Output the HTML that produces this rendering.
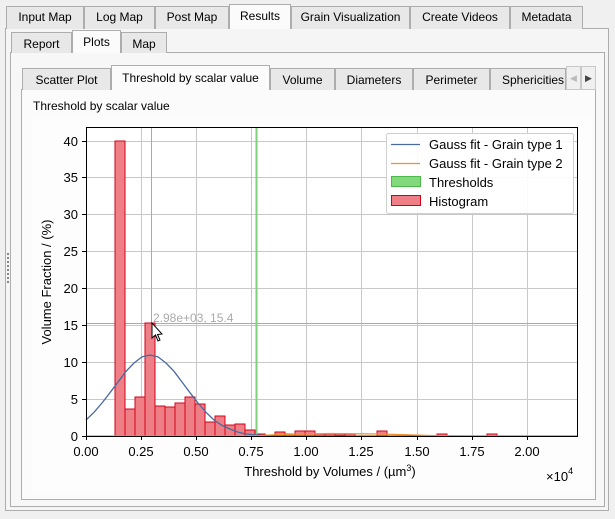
<!DOCTYPE html>
<html><head><meta charset="utf-8"><style>
body{margin:0;width:615px;height:519px;background:#f0f0f0;font-family:"Liberation Sans",Tahoma,sans-serif;font-size:12px;color:#000;position:relative;overflow:hidden}
.a{position:absolute;box-sizing:border-box}
.tab{position:absolute;box-sizing:border-box;border:1px solid #adadad;border-bottom:none;background:#e8e8e8;text-align:center;font-size:12px;line-height:21px}
.sel{background:#fbfbfb;z-index:3}
</style></head><body>
<div class="a" style="left:5px;top:28px;width:604px;height:483px;border:1px solid #adadad;background:#f5f5f5"></div>
<div class="tab" style="left:6px;top:6px;width:78px;height:23px">Input Map</div>
<div class="tab" style="left:84px;top:6px;width:71px;height:23px">Log Map</div>
<div class="tab" style="left:155px;top:6px;width:74px;height:23px">Post Map</div>
<div class="tab sel" style="left:229px;top:4px;width:62px;height:25px;line-height:22px">Results</div>
<div class="tab" style="left:291px;top:6px;width:119px;height:23px">Grain Visualization</div>
<div class="tab" style="left:410px;top:6px;width:100px;height:23px">Create Videos</div>
<div class="tab" style="left:510px;top:6px;width:73px;height:23px">Metadata</div>
<div class="a" style="left:10px;top:52px;width:595px;height:455px;border:1px solid #adadad;background:#f7f7f7"></div>
<div class="tab" style="left:11px;top:32px;width:61px;height:21px;line-height:23px">Report</div>
<div class="tab sel" style="left:72px;top:30px;width:49px;height:23px;line-height:22px">Plots</div>
<div class="tab" style="left:121px;top:32px;width:46px;height:21px;line-height:23px">Map</div>
<div class="a" style="left:21px;top:89px;width:575px;height:411px;border:1px solid #adadad;background:#fbfbfb"></div>
<div class="tab" style="left:22px;top:68px;width:89px;height:22px;line-height:23px">Scatter Plot</div>
<div class="tab sel" style="left:111px;top:65px;width:159px;height:25px;line-height:24px">Threshold by scalar value</div>
<div class="tab" style="left:270px;top:68px;width:65px;height:22px;line-height:23px">Volume</div>
<div class="tab" style="left:335px;top:68px;width:78px;height:22px;line-height:23px">Diameters</div>
<div class="tab" style="left:413px;top:68px;width:77px;height:22px;line-height:23px">Perimeter</div>
<div class="tab" style="left:490px;top:68px;width:76px;height:22px;line-height:23px;overflow:hidden;text-align:left;padding-left:11px">Sphericities</div>
<div class="tab" style="left:566px;top:66px;width:15px;height:24px;border:1px solid #c8c8c8;background:#f0f0f0;color:#bbb;font-size:9px;line-height:22px">◀</div>
<div class="tab" style="left:581px;top:66px;width:15px;height:24px;border:1px solid #c8c8c8;background:#f0f0f0;color:#444;font-size:9px;line-height:22px">▶</div>
<div class="a" style="left:33px;top:99px;font-size:12px">Threshold by scalar value</div>
<div class="a" style="left:7px;top:253px;width:3px;height:30px;border-left:2px dotted #888"></div>
<svg class="a" style="left:0;top:0" width="615" height="519" font-family="Liberation Sans, Arial, sans-serif">
<rect x="32" y="119" width="560" height="373" fill="#fff" opacity="0.6"/>
<rect x="86" y="127" width="492" height="309" fill="#fff"/>
<g stroke="#c8c8c8" stroke-width="1">
<line x1="141.5" y1="127" x2="141.5" y2="436"/><line x1="196.5" y1="127" x2="196.5" y2="436"/><line x1="251.5" y1="127" x2="251.5" y2="436"/><line x1="306.5" y1="127" x2="306.5" y2="436"/><line x1="361.5" y1="127" x2="361.5" y2="436"/><line x1="417.5" y1="127" x2="417.5" y2="436"/><line x1="472.5" y1="127" x2="472.5" y2="436"/><line x1="527.5" y1="127" x2="527.5" y2="436"/>
<line x1="86" y1="399.5" x2="578" y2="399.5"/><line x1="86" y1="362.5" x2="578" y2="362.5"/><line x1="86" y1="325.5" x2="578" y2="325.5"/><line x1="86" y1="288.5" x2="578" y2="288.5"/><line x1="86" y1="251.5" x2="578" y2="251.5"/><line x1="86" y1="214.5" x2="578" y2="214.5"/><line x1="86" y1="177.5" x2="578" y2="177.5"/><line x1="86" y1="141.5" x2="578" y2="141.5"/>
</g>
<g stroke="#aaa"><line x1="151.5" y1="127" x2="151.5" y2="436"/><line x1="86" y1="323.5" x2="578" y2="323.5"/></g>
<g fill="#ef7f86" stroke="#d40018" stroke-width="1">
<rect x="115" y="141" width="10" height="295"/><rect x="125" y="409" width="10" height="27"/><rect x="135" y="397" width="10" height="39"/><rect x="145" y="323" width="10" height="113"/><rect x="155" y="406" width="10" height="30"/><rect x="165" y="407" width="10" height="29"/><rect x="175" y="403" width="10" height="33"/><rect x="185" y="397" width="10" height="39"/><rect x="195" y="404" width="10" height="32"/><rect x="205" y="422" width="10" height="14"/><rect x="215" y="416" width="10" height="20"/><rect x="225" y="425" width="10" height="11"/><rect x="235" y="424" width="10" height="12"/><rect x="245" y="430" width="10" height="6"/><rect x="255" y="434" width="10" height="2"/><rect x="265" y="435" width="10" height="1"/><rect x="275" y="432" width="10" height="4"/><rect x="285" y="434" width="10" height="2"/><rect x="295" y="431" width="10" height="5"/><rect x="305" y="431" width="10" height="5"/><rect x="315" y="434" width="10" height="2"/><rect x="325" y="434" width="10" height="2"/><rect x="335" y="435" width="10" height="1"/><rect x="345" y="434" width="10" height="2"/><rect x="377" y="431" width="10" height="5"/><rect x="437" y="434" width="10" height="2"/><rect x="487" y="434" width="10" height="2"/>
</g>
<line x1="256.5" y1="127" x2="256.5" y2="436" stroke="#7fcf7f" stroke-width="2"/>
<polyline fill="none" stroke="#4a6aa0" stroke-width="1.3" stroke-linejoin="round" points="86,420 94,412.3 102,403 110,392.7 118,382 126,371.3 134,363 142,356.9 150,355 158,356.9 166,363 174,371.3 182,382 190,392.7 198,403 206,412.3 214,420 222,425.4 230,429 238,432.1 246,434 254,434.8 270,436 578,436"/>
<polyline fill="none" stroke="#f0902a" stroke-width="1.2" points="86,436 250,436 280,434.5 330,433.5 380,434 430,435.5 480,436 578,436"/>
<rect x="86.5" y="127.5" width="491" height="309" fill="none" stroke="#000"/>
<g stroke="#000"><line x1="82" y1="436.5" x2="86" y2="436.5"/><line x1="82" y1="399.5" x2="86" y2="399.5"/><line x1="82" y1="362.5" x2="86" y2="362.5"/><line x1="82" y1="325.5" x2="86" y2="325.5"/><line x1="82" y1="288.5" x2="86" y2="288.5"/><line x1="82" y1="251.5" x2="86" y2="251.5"/><line x1="82" y1="214.5" x2="86" y2="214.5"/><line x1="82" y1="177.5" x2="86" y2="177.5"/><line x1="82" y1="141.5" x2="86" y2="141.5"/>
<line x1="86.5" y1="436" x2="86.5" y2="440"/><line x1="141.5" y1="436" x2="141.5" y2="440"/><line x1="196.5" y1="436" x2="196.5" y2="440"/><line x1="251.5" y1="436" x2="251.5" y2="440"/><line x1="306.5" y1="436" x2="306.5" y2="440"/><line x1="361.5" y1="436" x2="361.5" y2="440"/><line x1="417.5" y1="436" x2="417.5" y2="440"/><line x1="472.5" y1="436" x2="472.5" y2="440"/><line x1="527.5" y1="436" x2="527.5" y2="440"/></g>
<g font-size="13" text-anchor="end"><text x="78" y="441">0</text><text x="78" y="404">5</text><text x="78" y="367">10</text><text x="78" y="330">15</text><text x="78" y="293">20</text><text x="78" y="256">25</text><text x="78" y="219">30</text><text x="78" y="182">35</text><text x="78" y="146">40</text></g>
<g font-size="13" text-anchor="middle"><text x="86" y="456">0.00</text><text x="141" y="456">0.25</text><text x="196" y="456">0.50</text><text x="251" y="456">0.75</text><text x="306" y="456">1.00</text><text x="361" y="456">1.25</text><text x="417" y="456">1.50</text><text x="472" y="456">1.75</text><text x="527" y="456">2.00</text>
<text x="330" y="476">Threshold by Volumes / (µm<tspan font-size="9" dy="-5">3</tspan><tspan dy="5">)</tspan></text></g>
<text x="546" y="481" font-size="13">×10<tspan font-size="9" dy="-7">4</tspan></text>
<text transform="translate(51,282) rotate(-90)" font-size="13" text-anchor="middle">Volume Fraction / (%)</text>
<text x="153" y="322" font-size="12" fill="#aaa">2.98e+03, 15.4</text>
<path d="M152,323 L152,338 L155.5,335 L158,341 L160,340 L157.5,334.5 L162,334 Z" fill="#fff" stroke="#000" stroke-width="1"/>
<rect x="386.5" y="133.5" width="187" height="80" fill="#fff" fill-opacity="0.9" stroke="#d0d0d0" rx="2"/>
<line x1="391" y1="144.5" x2="420" y2="144.5" stroke="#4a6aa0" stroke-width="1.3"/>
<line x1="391" y1="163.5" x2="420" y2="163.5" stroke="#f0902a" stroke-width="1.3"/>
<rect x="391.5" y="176.5" width="29" height="10" fill="#82d97c" stroke="#4cb84a"/>
<rect x="391.5" y="195.5" width="29" height="10" fill="#ef7f86" stroke="#d40018"/>
<g font-size="13"><text x="429" y="149">Gauss fit - Grain type 1</text><text x="429" y="168">Gauss fit - Grain type 2</text><text x="429" y="187">Thresholds</text><text x="429" y="206">Histogram</text></g>
</svg>
</body></html>
